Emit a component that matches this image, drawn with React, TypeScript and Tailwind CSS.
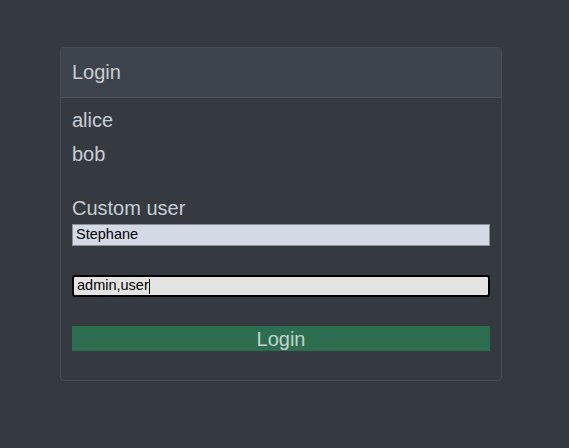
export default function App() {
  return (
    <div className="min-h-[448px] w-full bg-[#343a40] pt-[47px] pl-[60px]" style={{ fontFamily: "'Liberation Sans', Arial, sans-serif" }}>
      <div className="w-[442px] rounded-[4px] border border-[#474e56] text-[#c8ced6]">
        <div className="h-[50px] border-b border-[#4b525a] bg-[#3d444b] px-[11px] pb-[2px] flex items-center text-[20px] rounded-t-[4px]">
          Login
        </div>
        <div className="px-[11px] pt-[7px] pb-[29px]">
          <div className="text-[20px] leading-[30px]">alice</div>
          <div className="text-[20px] leading-[30px] mt-[4px]">bob</div>
          <div className="text-[20px] leading-[30px] mt-[24px]">Custom user</div>
          <div className="mt-[1px] h-[22px] w-[418px] border border-[#8a8f96] bg-[#d3dae6] px-[3px] flex items-center text-[14.5px] text-black">
            Stephane
          </div>
          <div className="mt-[29px] h-[22px] w-[418px] rounded-[3px] border-2 border-black bg-[#e4e4e4] px-[3px] flex items-center text-[14.5px] text-black">
            admin,user<span className="inline-block w-px h-[15px] bg-black"></span>
          </div>
          <div className="mt-[29px] h-[25px] w-[418px] bg-[#2c6e4f] flex items-center justify-center text-[20px] text-[#c3d3cc]">
            Login
          </div>
        </div>
      </div>
    </div>
  );
}
